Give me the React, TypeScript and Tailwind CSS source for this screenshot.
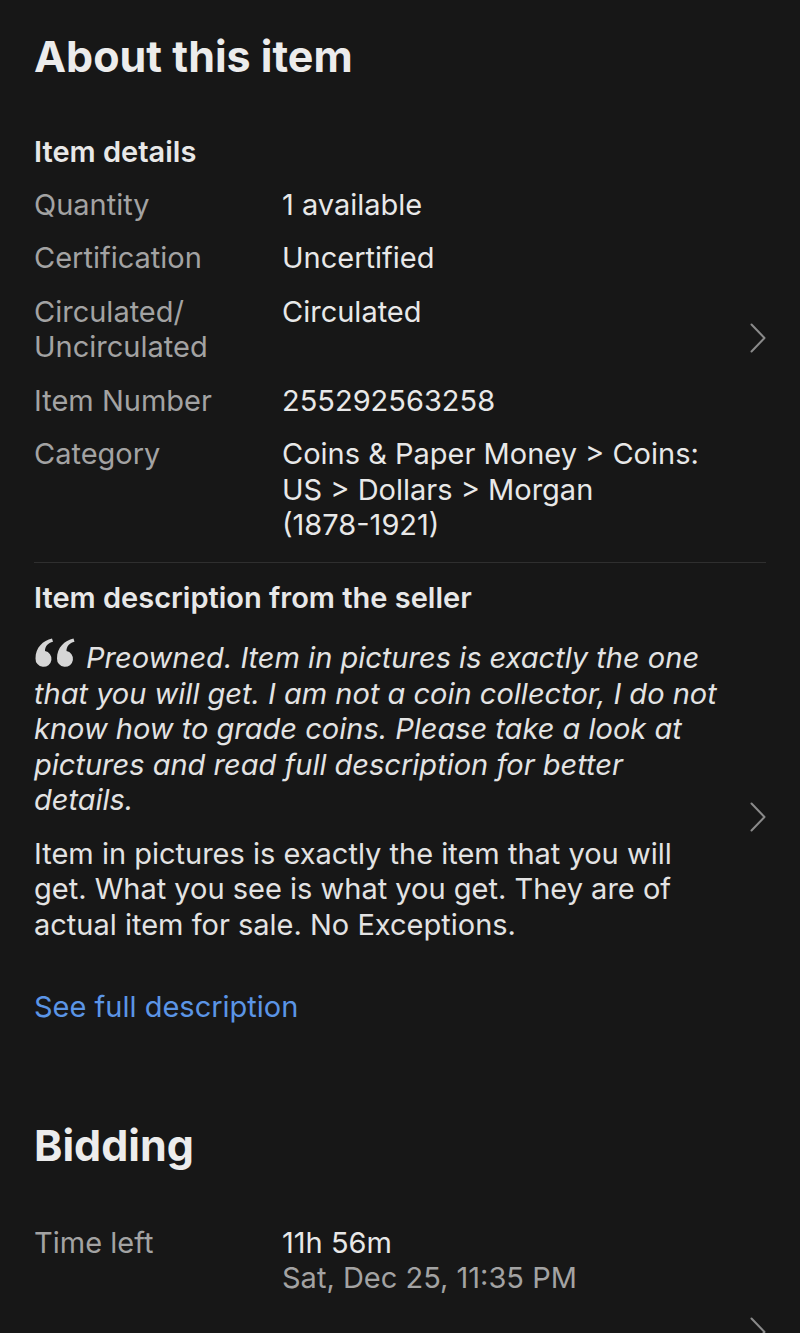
const details: { label: string[]; value: React.ReactNode }[] = [
  { label: ["Quantity"], value: "1 available" },
  { label: ["Certification"], value: "Uncertified" },
  { label: ["Circulated/", "Uncirculated"], value: "Circulated" },
  { label: ["Item Number"], value: "255292563258" },
  {
    label: ["Category"],
    value: (
      <>
        Coins & Paper Money &gt; Coins: US &gt; Dollars &gt; Morgan{" "}
        <span className="whitespace-nowrap">(1878-1921)</span>
      </>
    ),
  },
];

function Chevron({ className = "" }: { className?: string }) {
  return (
    <div className={`flex w-[34px] shrink-0 justify-end ${className}`}>
      <svg viewBox="0 0 16 30" className="h-[30px] w-[16px]" fill="none">
        <path
          d="M1.5 1.5 L14.5 15 L1.5 28.5"
          stroke="#8a8a8a"
          strokeWidth="2"
          strokeLinecap="round"
          strokeLinejoin="round"
        />
      </svg>
    </div>
  );
}

function QuoteMark() {
  return (
    <svg
      viewBox="0 0 42 34"
      className="mr-[10px] inline-block h-[35px] w-[42px] align-[-5px]"
      fill="#d6d6d6"
    >
      <path d="M18 0 C9 2 1.5 9 1.5 20 a8 8 0 1 0 9.5-7.5 C11 7.5 14 4.5 19 3.2 Z" />
      <path d="M39.5 0 C30.5 2 23 9 23 20 a8 8 0 1 0 9.5-7.5 C32.5 7.5 35.5 4.5 40.5 3.2 Z" />
    </svg>
  );
}

export default function App() {
  return (
    <div
      className="h-[1333px] w-[800px] overflow-hidden bg-[#171717] px-[34px] pt-[28px] text-[29px] leading-[35.5px] text-[#e6e6e6]"
      style={{ fontFamily: "Inter, 'Liberation Sans', sans-serif" }}
    >
      <h1 className="text-[43px] font-bold leading-[56px] text-[#ececec]">
        About this item
      </h1>

      {/* ---- Item details ---- */}
      <section className="mt-[50px] flex items-center">
        <div className="flex-1">
          <h2 className="font-semibold text-[#e8e8e8]">Item details</h2>
          <div className="mt-[17px] flex flex-col gap-[18px]">
            {details.map((row) => (
              <div key={row.label[0]} className="flex">
                <div className="w-[248px] shrink-0 text-[#a3a3a3]">
                  {row.label.map((l) => (
                    <div key={l}>{l}</div>
                  ))}
                </div>
                <div className="flex-1 pr-4 text-[#e8e8e8]">{row.value}</div>
              </div>
            ))}
          </div>
        </div>
        <Chevron />
      </section>

      <div className="mt-[19px] h-px bg-[#2f2f2f]" />

      {/* ---- Description ---- */}
      <section className="mt-[17px] flex items-center">
        <div className="flex-1">
          <h2 className="font-semibold text-[#e8e8e8]">
            Item description from the seller
          </h2>
          <p className="mt-[23px] pr-[10px] italic text-[#e3e3e3]">
            <QuoteMark />
            Preowned. Item in pictures is exactly the one that you will get. I
            am not a coin collector, I do not know how to grade coins. Please
            take a look at pictures and read full description for better
            details.
          </p>
          <p className="mt-[18px] pr-4 text-[#e3e3e3]">
            Item in pictures is exactly the item that you will get. What you see
            is what you get. They are of actual item for sale. No Exceptions.
          </p>
          <p className="mt-[47px] text-[#5b95e6]">See full description</p>
        </div>
        <Chevron className="pt-[30px]" />
      </section>

      {/* ---- Bidding ---- */}
      <h1 className="mt-[92px] text-[43px] font-bold leading-[56px] text-[#ececec]">
        Bidding
      </h1>
      <section className="mt-[52px] flex">
        <div className="w-[248px] shrink-0 text-[#a3a3a3]">Time left</div>
        <div className="flex-1">
          <div className="text-[#e8e8e8]">11h 56m</div>
          <div className="text-[#a3a3a3]">Sat, Dec 25, 11:35 PM</div>
        </div>
      </section>
      <div className="mt-[21px] flex justify-end">
        <Chevron />
      </div>
    </div>
  );
}
